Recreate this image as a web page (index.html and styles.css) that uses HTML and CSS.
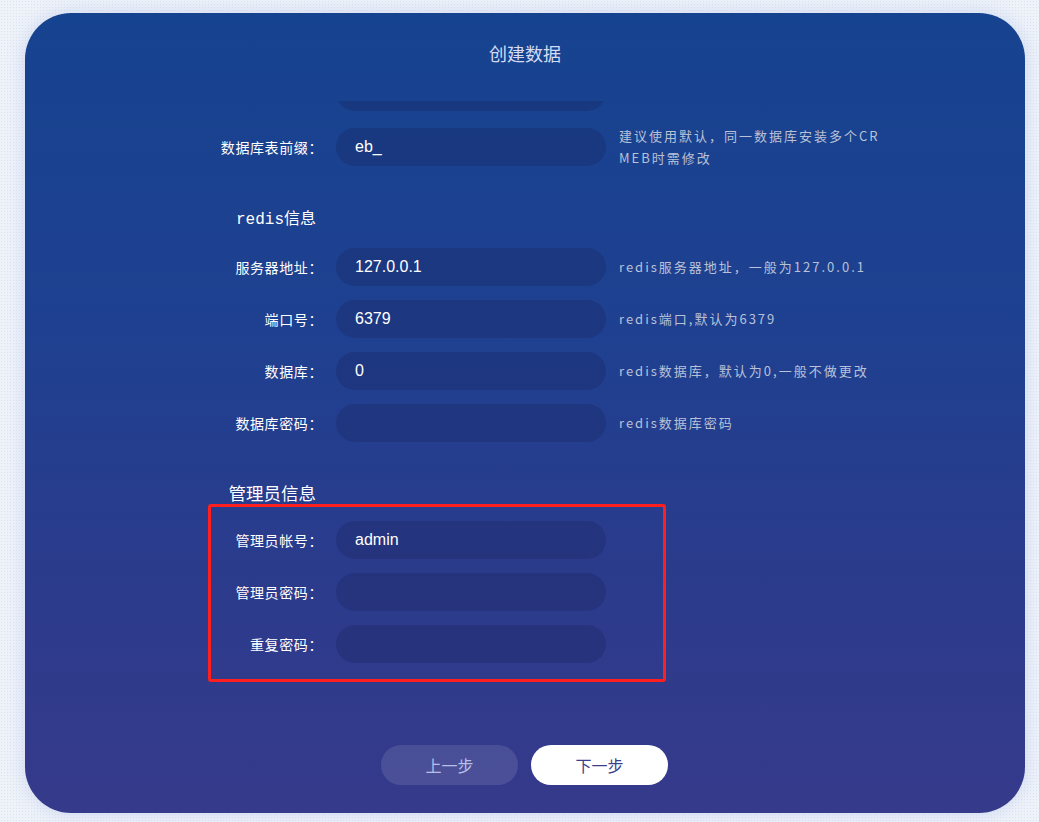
FILE: index.html
```html
<!DOCTYPE html>
<html lang="zh-CN">
<head>
<meta charset="utf-8">
<title>创建数据</title>
<link rel="stylesheet" href="styles.css">
</head>
<body>
<div class="card">
  <h1 class="title">创建数据</h1>
  <div class="scroll">
    <div class="form">
      <div class="row row-first">
        <label class="label"></label>
        <div class="input"></div>
        <div class="hint"></div>
      </div>
      <div class="row">
        <label class="label">数据库表前缀：</label>
        <div class="input">eb_</div>
        <div class="hint">建议使用默认，同一数据库安装多个CRMEB时需修改</div>
      </div>

      <h2 class="section section-redis">redis信息</h2>
      <div class="row">
        <label class="label">服务器地址：</label>
        <div class="input">127.0.0.1</div>
        <div class="hint">redis服务器地址，一般为127.0.0.1</div>
      </div>
      <div class="row">
        <label class="label">端口号：</label>
        <div class="input">6379</div>
        <div class="hint">redis端口,默认为6379</div>
      </div>
      <div class="row">
        <label class="label">数据库：</label>
        <div class="input">0</div>
        <div class="hint">redis数据库，默认为0,一般不做更改</div>
      </div>
      <div class="row">
        <label class="label">数据库密码：</label>
        <div class="input"></div>
        <div class="hint">redis数据库密码</div>
      </div>

      <h2 class="section section-admin">管理员信息</h2>
      <div class="row">
        <label class="label">管理员帐号：</label>
        <div class="input">admin</div>
        <div class="hint"></div>
      </div>
      <div class="row">
        <label class="label">管理员密码：</label>
        <div class="input"></div>
        <div class="hint"></div>
      </div>
      <div class="row">
        <label class="label">重复密码：</label>
        <div class="input"></div>
        <div class="hint"></div>
      </div>
    </div>
  </div>
  <div class="footer">
    <button class="btn btn-prev">上一步</button>
    <button class="btn btn-next">下一步</button>
  </div>
  <div class="highlight"></div>
</div>
</body>
</html>
```

FILE: styles.css
```css
* { box-sizing: border-box; }

html, body {
  margin: 0;
  padding: 0;
}

body {
  width: 1039px;
  height: 822px;
  overflow: hidden;
  background-color: #eef2f9;
  background-image: radial-gradient(rgba(200, 212, 235, 0.5) 1px, transparent 1px);
  background-size: 3px 3px;
  font-family: "Noto Sans CJK SC", "Noto Sans", sans-serif;
  padding-top: 13px;
  padding-left: 25px;
}

.card {
  position: relative;
  width: 1000px;
  height: 800px;
  border-radius: 46px;
  background: linear-gradient(180deg, #16438f 0%, #1f4090 40%, #2b3b8c 70%, #363a8b 100%);
  box-shadow: 0 0 18px rgba(140, 165, 225, 0.35);
  display: flex;
  flex-direction: column;
  padding-top: 28px;
}

.title {
  margin: 0;
  height: 24px;
  line-height: 24px;
  text-align: center;
  font-size: 18px;
  font-weight: normal;
  color: #d3dcf3;
}

.scroll {
  margin-top: 36px;
  height: 614px;
  overflow: hidden;
}

.form {
  padding-left: 164px;
}

.row {
  display: flex;
  align-items: center;
  margin-bottom: 14px;
  min-height: 38px;
}

.row-first {
  margin-top: -28px;
}

.label {
  width: 134px;
  flex: none;
  text-align: right;
  font-size: 14px;
  letter-spacing: 0.6px;
  color: #ffffff;
  line-height: 20px;
}

.input {
  flex: none;
  width: 270px;
  height: 38px;
  margin-left: 13px;
  border-radius: 19px;
  background: rgba(22, 30, 86, 0.26);
  padding-left: 19px;
  font-family: "Liberation Sans", Arial, sans-serif;
  font-size: 16px;
  line-height: 38px;
  color: #ffffff;
}

.hint {
  flex: none;
  width: 264px;
  margin-left: 13px;
  font-family: "Noto Sans CJK SC", sans-serif;
  font-size: 13px;
  letter-spacing: 2px;
  line-height: 22px;
  color: #b9c1d8;
  word-break: break-all;
}

.section {
  margin: 39px 0 16px 0;
  width: 127px;
  height: 24px;
  line-height: 24px;
  text-align: right;
  font-weight: normal;
  color: #ffffff;
}

.section-redis {
  font-family: "Liberation Mono", "Noto Sans CJK SC", monospace;
  font-size: 16px;
}

.section-admin {
  font-family: "Noto Sans CJK SC", sans-serif;
  font-size: 17.5px;
}

.footer {
  display: flex;
  justify-content: center;
  gap: 13px;
  padding-top: 30px;
  padding-right: 1px;
}

.btn {
  width: 137px;
  height: 40px;
  border: none;
  border-radius: 20px;
  font-family: "Noto Sans CJK SC", sans-serif;
  font-size: 16px;
  cursor: pointer;
}

.btn-prev {
  background: rgba(255, 255, 255, 0.11);
  color: #b7bfe6;
}

.btn-next {
  background: #ffffff;
  color: #3b3f8e;
}

.highlight {
  position: absolute;
  left: 183px;
  top: 491px;
  width: 458px;
  height: 178px;
  border: 3px solid #ff1f1f;
  border-radius: 3px;
  pointer-events: none;
}
```
